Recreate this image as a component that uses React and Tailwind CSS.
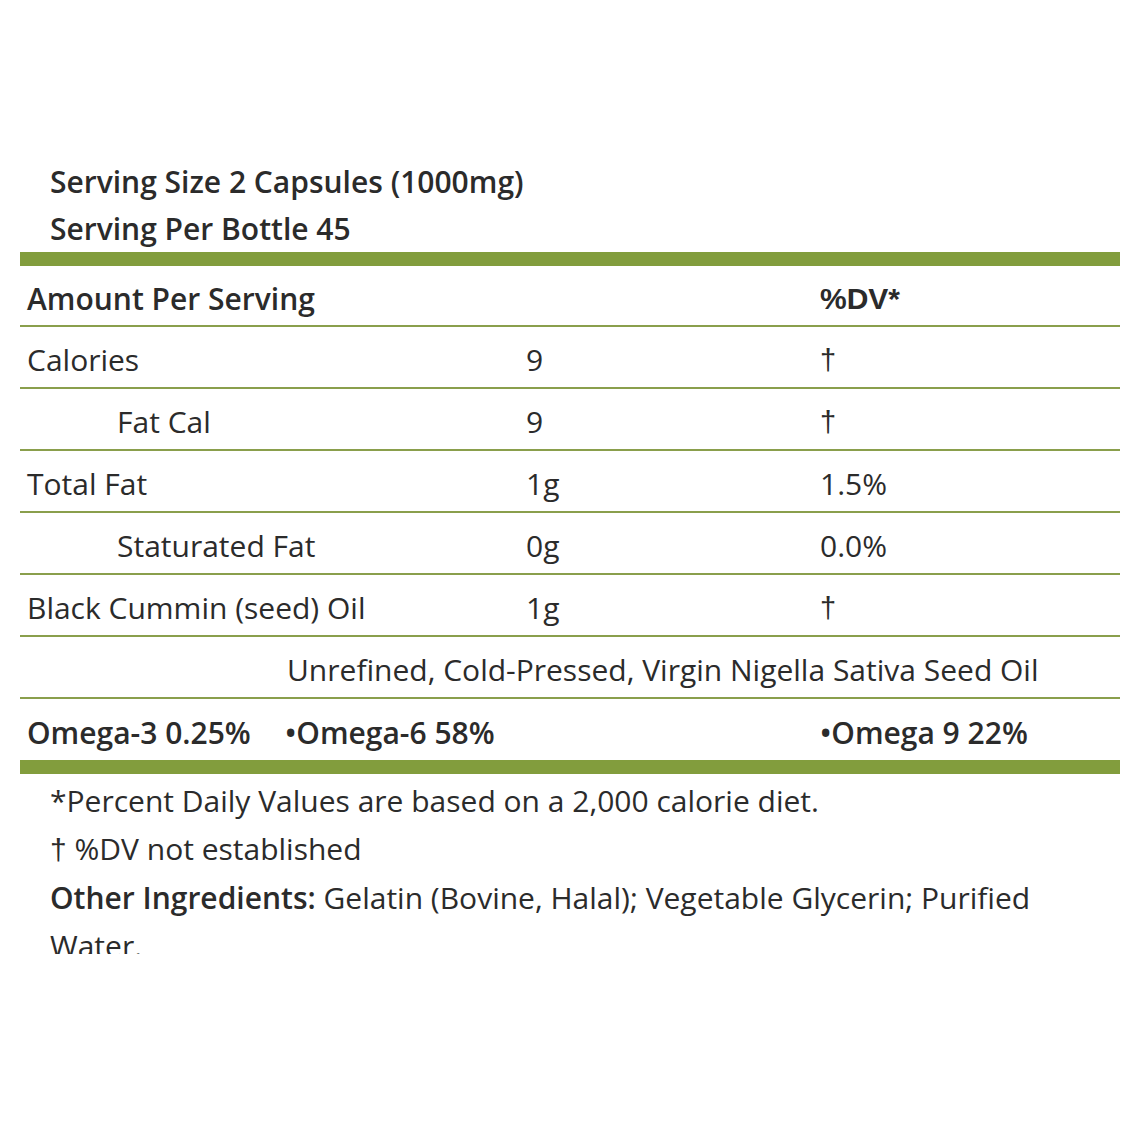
import React from 'react';

const ROWS = [
  { name: 'Calories', amount: '9', dv: '†' },
  { name: 'Fat Cal', amount: '9', dv: '†', indent: true },
  { name: 'Total Fat', amount: '1g', dv: '1.5%' },
  { name: 'Staturated Fat', amount: '0g', dv: '0.0%', indent: true },
  { name: 'Black Cummin (seed) Oil', amount: '1g', dv: '†' },
];

const DvCell = ({ value }) =>
  value === '†' ? (
    <span className="font-['Liberation_Sans',Arial,sans-serif] text-[29px]">†</span>
  ) : (
    <span>{value}</span>
  );

const App = () => {
  return (
    <div className="w-[1142px] h-[1142px] bg-white text-[#2b2b2b] font-['Open_Sans',sans-serif] text-[30px]">
      {/* Serving info */}
      <div className="pt-[158px] pl-[50px] font-semibold leading-[47px]">
        <div>Serving Size 2 Capsules (1000mg)</div>
        <div>Serving Per Bottle 45</div>
      </div>

      {/* Facts table */}
      <div className="mx-[20px] w-[1100px] border-t-[14px] border-b-[14px] border-[#829d3d]">
        <div className="flex items-center h-[61px] pt-[5px] border-b-2 border-[#8a9f4c] font-semibold">
          <div className="w-[800px] pl-[7px]">Amount Per Serving</div>
          <div className="font-['Liberation_Sans',Arial,sans-serif] font-bold text-[30px]">%DV*</div>
        </div>

        {ROWS.map((row) => (
          <div key={row.name} className="flex items-center h-[62px] pt-[4px] border-b-2 border-[#8a9f4c]">
            <div className={row.indent ? 'w-[506px] pl-[97px]' : 'w-[506px] pl-[7px]'}>{row.name}</div>
            <div className="w-[294px]">{row.amount}</div>
            <div>
              <DvCell value={row.dv} />
            </div>
          </div>
        ))}

        <div className="flex items-center h-[62px] pt-[4px] border-b-2 border-[#8a9f4c]">
          <div className="pl-[267px]">Unrefined, Cold-Pressed, Virgin Nigella Sativa Seed Oil</div>
        </div>

        <div className="flex items-center h-[61px] pt-[5px] font-semibold">
          <div className="w-[265px] pl-[7px]">Omega-3 0.25%</div>
          <div className="w-[535px]">•Omega-6 58%</div>
          <div>•Omega 9 22%</div>
        </div>
      </div>

      {/* Footnotes, last line clipped as in the label image */}
      <div className="h-[180px] overflow-hidden pt-[3px] pl-[50px] w-[1120px] leading-[48px]">
        <p>*Percent Daily Values are based on a 2,000 calorie diet.</p>
        <p>
          <span className="font-['Liberation_Sans',Arial,sans-serif]">†</span> %DV not established
        </p>
        <p>
          <span className="font-semibold">Other Ingredients:</span> Gelatin (Bovine, Halal); Vegetable Glycerin; Purified Water.
        </p>
      </div>
    </div>
  );
};

export default App;
